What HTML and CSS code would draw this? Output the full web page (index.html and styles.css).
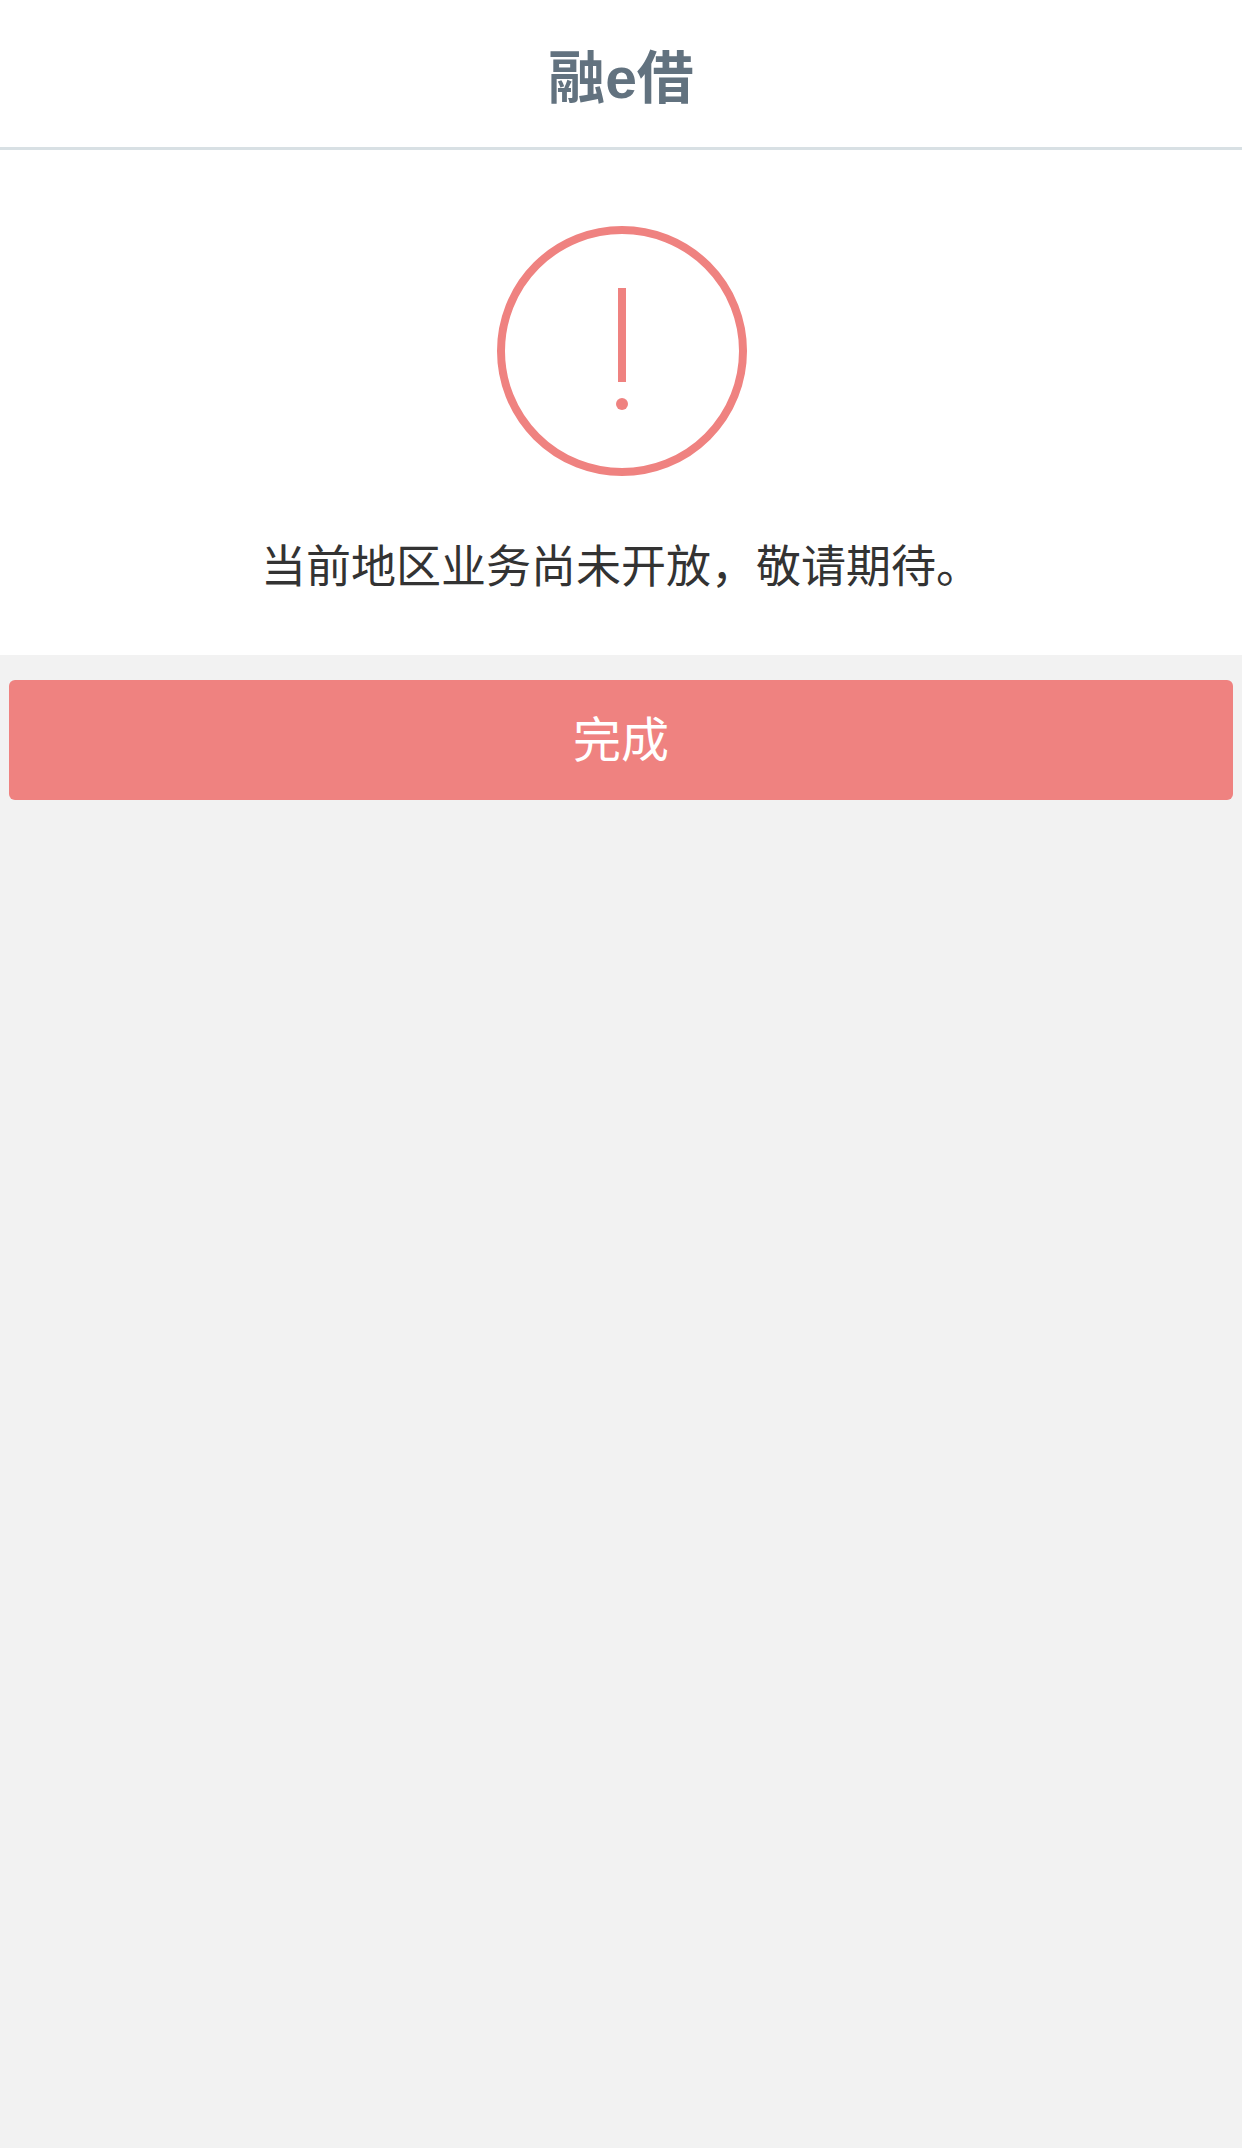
FILE: index.html
```html
<!DOCTYPE html>
<html lang="zh-CN">
<head>
<meta charset="utf-8">
<title>融e借</title>
<link rel="stylesheet" href="styles.css">
</head>
<body>
<header class="topbar"><h1 class="title">融e借</h1></header>
<main>
<section class="notice">
<svg class="alert-icon" width="252" height="252" viewBox="0 0 252 252" aria-hidden="true">
<circle cx="126" cy="126" r="121" fill="none" stroke="#ef8280" stroke-width="8"/>
<rect x="122" y="63" width="8" height="94" fill="#ef8280"/>
<circle cx="126" cy="179" r="6" fill="#ef8280"/>
</svg>
<p class="message">当前地区业务尚未开放，敬请期待。</p>
</section>
<div class="actions"><button class="done" type="button">完成</button></div>
</main>
</body>
</html>
```
FILE: styles.css
```css
* { box-sizing: border-box; }
html, body { margin: 0; height: 100%; }
body {
  background: #f2f2f2;
  font-family: "Liberation Sans", "Noto Sans CJK SC", sans-serif;
}
.topbar {
  height: 150px;
  background: #fff;
  border-bottom: 3px solid #d8e0e4;
  display: flex;
  align-items: center;
  justify-content: center;
  padding-top: 10px;
}
.title {
  margin: 0;
  font-size: 57px;
  font-weight: 700;
  color: #62727f;
  line-height: 1;
}
.notice {
  height: 505px;
  background: #fff;
  display: flex;
  flex-direction: column;
  align-items: center;
  padding-top: 75px;
}
.alert-icon {
  display: block;
  margin-left: 2px;
}
.message {
  margin: 61px 0 0;
  font-size: 45px;
  line-height: 60px;
  color: #333;
}
.actions { padding: 25px 9px 0; }
.done {
  display: block;
  width: 100%;
  height: 120px;
  border: 0;
  border-radius: 6px;
  padding: 0 0 8px;
  background: #ef8280;
  color: #fff;
  font-family: inherit;
  font-size: 48px;
}
```
